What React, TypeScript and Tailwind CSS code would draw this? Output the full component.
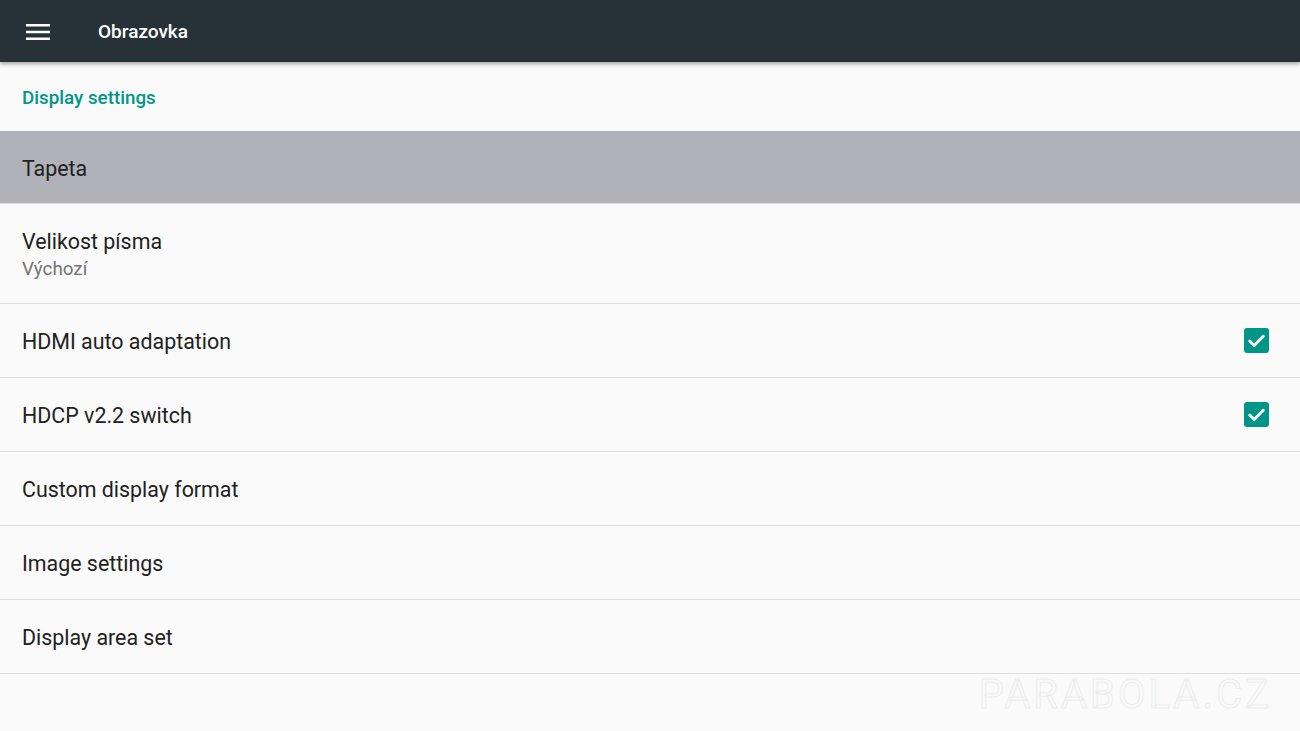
import React from 'react';

type Row = {
  title: string;
  summary?: string;
  checked?: boolean;
  selected?: boolean;
  height: string;
};

const rows: Row[] = [
  { title: 'Tapeta', selected: true, height: 'h-[73px]' },
  { title: 'Velikost písma', summary: 'Výchozí', height: 'h-[100px]' },
  { title: 'HDMI auto adaptation', checked: true, height: 'h-[74px]' },
  { title: 'HDCP v2.2 switch', checked: true, height: 'h-[74px]' },
  { title: 'Custom display format', height: 'h-[74px]' },
  { title: 'Image settings', height: 'h-[74px]' },
  { title: 'Display area set', height: 'h-[74px]' },
];

function Checkbox() {
  return (
    <div className="w-[25px] h-[25px] rounded-[3px] bg-[#009587] flex items-center justify-center">
      <svg width="25" height="25" viewBox="0 0 24 24" fill="none">
        <path d="M5.5 12.5l4.3 4.3L18.5 8" stroke="white" strokeWidth="2.8" strokeLinecap="round" strokeLinejoin="round" />
      </svg>
    </div>
  );
}

export default function App() {
  return (
    <div className="w-[1300px] h-[731px] overflow-hidden bg-[#fafafa] flex flex-col relative" style={{ fontFamily: 'Roboto, "Liberation Sans", sans-serif' }}>
      {/* Toolbar */}
      <div className="h-[62px] bg-[#263238] flex items-center flex-shrink-0 shadow-[0_2px_4px_rgba(0,0,0,0.35)] z-10">
        <div className="w-[98px] flex items-center pl-[26px] pt-[2px]">
          <svg width="24" height="18" viewBox="0 0 24 18">
            <rect x="0" y="1" width="24" height="2.5" fill="white" />
            <rect x="0" y="7.75" width="24" height="2.5" fill="white" />
            <rect x="0" y="14.5" width="24" height="2.5" fill="white" />
          </svg>
        </div>
        <span className="text-white text-[19px] font-medium pt-[3px]">Obrazovka</span>
      </div>

      {/* Category header */}
      <div className="h-[69px] flex items-center px-[22px] flex-shrink-0">
        <span className="text-[#00968a] text-[18.8px] font-medium pt-[3px]">Display settings</span>
      </div>

      {/* Preference list */}
      <div className="flex flex-col">
        {rows.map((row) => (
          <div
            key={row.title}
            className={`${row.height} flex items-center justify-between pl-[22px] pr-[31px] border-b border-[#dddddd] ${
              row.selected ? 'bg-[#b0b1b9]' : ''
            }`}
          >
            <div className="flex flex-col pt-[3px]">
              <span className="text-[21.4px] text-[#212121] leading-[28px]">{row.title}</span>
              {row.summary && (
                <span className="text-[18.8px] text-[#737373] leading-[26px]">{row.summary}</span>
              )}
            </div>
            {row.checked && <Checkbox />}
          </div>
        ))}
      </div>

      {/* faint watermark */}
      <div className="absolute right-[28px] bottom-[6px] text-[40px] tracking-[3px] text-transparent select-none" style={{ WebkitTextStroke: '1px #ededed' }}>
        PARABOLA.CZ
      </div>
    </div>
  );
}
